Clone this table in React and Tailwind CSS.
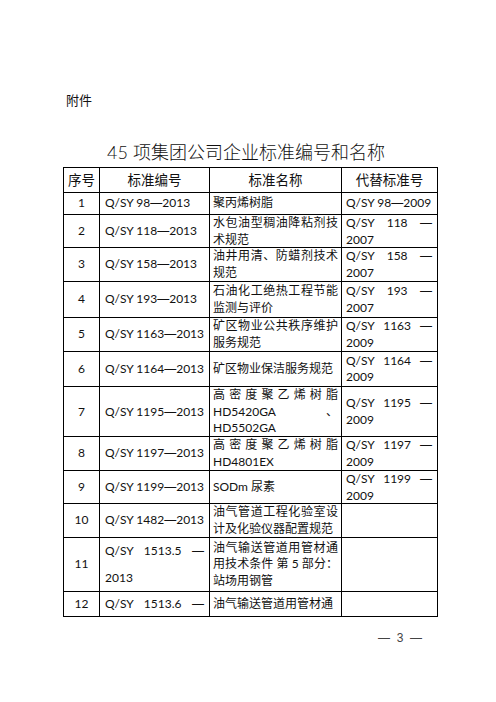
import React from 'react';

const J = (t) => ({ t, j: true });

const rows = [
  { no: '1', code: ['Q/SY 98—2013'], name: ['聚丙烯树脂'], rep: ['Q/SY 98—2009'], h: 'h-[22px]' },
  { no: '2', code: ['Q/SY 118—2013'], name: [J('水包油型稠油降粘剂技'), '术规范'], rep: [J('Q/SY 118 —'), '2007'], h: 'h-[33px]' },
  { no: '3', code: ['Q/SY 158—2013'], name: [J('油井用清、防蜡剂技术'), '规范'], rep: [J('Q/SY 158 —'), '2007'], h: 'h-[34px]' },
  { no: '4', code: ['Q/SY 193—2013'], name: [J('石油化工绝热工程节能'), '监测与评价'], rep: [J('Q/SY 193 —'), '2007'], h: 'h-[36px]' },
  { no: '5', code: ['Q/SY 1163—2013'], name: [J('矿区物业公共秩序维护'), '服务规范'], rep: [J('Q/SY 1163 —'), '2009'], h: 'h-[34px]' },
  { no: '6', code: ['Q/SY 1164—2013'], name: ['矿区物业保洁服务规范'], rep: [J('Q/SY 1164 —'), '2009'], h: 'h-[35px]' },
  { no: '7', code: ['Q/SY 1195—2013'], name: [J('高 密 度 聚 乙 烯 树 脂'), J('HD5420GA 、'), 'HD5502GA'], rep: [J('Q/SY 1195 —'), '2009'], h: 'h-[50px]' },
  { no: '8', code: ['Q/SY 1197—2013'], name: [J('高 密 度 聚 乙 烯 树 脂'), 'HD4801EX'], rep: [J('Q/SY 1197 —'), '2009'], h: 'h-[34px]' },
  { no: '9', code: ['Q/SY 1199—2013'], name: ['SODm 尿素'], rep: [J('Q/SY 1199 —'), '2009'], h: 'h-[33px]' },
  { no: '10', code: ['Q/SY 1482—2013'], name: [J('油气管道工程化验室设'), '计及化验仪器配置规范'], rep: [], h: 'h-[34px]' },
  { no: '11', code: [J('Q/SY 1513.5 —'), '2013'], split: true, name: [J('油气输送管道用管材通'), J('用技术条件 第 5 部分：'), '站场用钢管'], rep: [], h: 'h-[54px]' },
  { no: '12', code: [J('Q/SY 1513.6 —')], name: ['油气输送管道用管材通'], rep: [], h: 'h-[25px]' },
];

// Lato's em dash is short; take the long one from Liberation Sans
function withDash(text) {
  const parts = text.split('—');
  return parts.map((p, i) => (
    <React.Fragment key={i}>
      {p}
      {i < parts.length - 1 && <span className="font-['Liberation_Sans']">—</span>}
    </React.Fragment>
  ));
}

function Lines({ lines }) {
  return lines.map((l, i) => {
    const line = typeof l === 'string' ? { t: l } : l;
    return (
      <div
        key={i}
        className={`whitespace-nowrap leading-[16.5px] ${line.j ? 'text-justify [text-align-last:justify]' : ''}`}
      >
        {withDash(line.t)}
      </div>
    );
  });
}

export default function App() {
  return (
    <div className="w-[496px] h-[702px] bg-white overflow-hidden text-[#111] font-['Lato','Noto_Sans_CJK_SC',sans-serif]">
      <div className="pt-[92px] pl-[66px] text-[13px] leading-[17px]">附件</div>

      <div className="mt-[32px] w-[496px] pr-[4px] text-center text-[18px] leading-[22px] font-light">
        45 项集团公司企业标准编号和名称
      </div>

      <div className="mt-[4px] ml-[63px] w-[375px] border-l border-t border-black">
        {/* header */}
        <div className="grid grid-cols-[36px_110px_132px_96px] h-[25px] border-b border-black text-[13.5px]">
          <div className="border-r border-black flex items-center justify-center">序号</div>
          <div className="border-r border-black flex items-center justify-center">标准编号</div>
          <div className="border-r border-black flex items-center justify-center">标准名称</div>
          <div className="border-r border-black flex items-center justify-center">代替标准号</div>
        </div>

        {rows.map((r) => (
          <div
            key={r.no}
            className={`grid grid-cols-[36px_110px_132px_96px] border-b border-black text-[12px] ${r.h}`}
          >
            <div className="border-r border-black flex items-center justify-center leading-[16.5px]">{r.no}</div>
            <div
              className={`border-r border-black px-[5px] flex flex-col justify-center ${r.split ? 'gap-[10px]' : ''}`}
            >
              <Lines lines={r.code} />
            </div>
            <div className="border-r border-black px-[3px] flex flex-col justify-center">
              <Lines lines={r.name} />
            </div>
            <div className="border-r border-black px-[4px] pr-[5px] flex flex-col justify-center">
              <Lines lines={r.rep} />
            </div>
          </div>
        ))}
      </div>

      <div className="mt-[14px] pr-[74px] text-right text-[12px] leading-[15px] text-[#444] font-['Liberation_Sans'] whitespace-pre">
        —  3  —
      </div>
    </div>
  );
}
